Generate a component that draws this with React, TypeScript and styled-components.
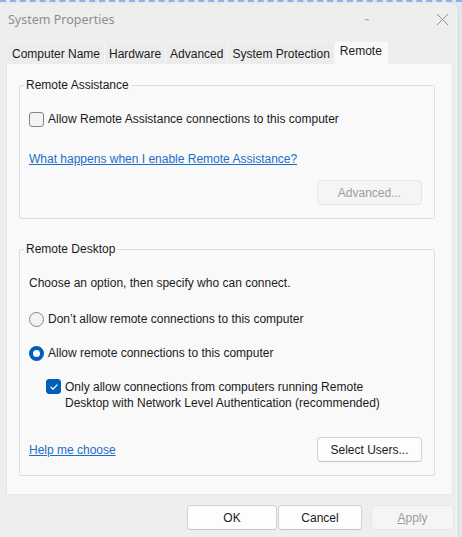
import React from 'react';
import styled, { createGlobalStyle } from 'styled-components';

const GlobalStyle = createGlobalStyle`
  html, body {
    margin: 0;
    padding: 0;
    background: #eeeeee;
  }
  body {
    font-family: "Liberation Sans", Arial, sans-serif;
    font-size: 12px;
    color: #1b1b1b;
  }
`;

const Desktop = styled.div`
  width: 462px;
  height: 537px;
  overflow: hidden;
  background: #dfe8f2;
  border-top: 2px dashed #8fb3dc;
  box-sizing: border-box;
  padding-top: 1px;
`;

const Window = styled.div`
  width: 459px;
  height: 534px;
  background: #eeeeee;
  border-top-right-radius: 8px;
  border-right: 1px solid #d6dbe2;
  box-sizing: border-box;
  display: flex;
  flex-direction: column;
`;

const TitleBar = styled.div`
  height: 39px;
  display: flex;
  align-items: center;
  padding: 0 0 6px 8px;
  box-sizing: border-box;
`;

const Title = styled.div`
  flex: 1;
  font-family: "Noto Sans", "Open Sans", sans-serif;
  font-size: 12.5px;
  color: #8d8d8d;
`;

const CaptionButton = styled.div<{ $w: number }>`
  width: ${p => p.$w}px;
  height: 32px;
  display: flex;
  align-items: center;
  justify-content: center;
  color: #9a9a9a;
`;

const TabStrip = styled.div`
  display: flex;
  align-items: flex-end;
  padding-left: 8px;
  height: 22px;
`;

const Tab = styled.div<{ $active?: boolean }>`
  height: ${p => (p.$active ? 22 : 19)}px;
  line-height: 19px;
  padding: 0 ${p => (p.$active ? 5 : 4)}px;
  background: ${p => (p.$active ? '#f9f9f9' : '#ececec')};
  border-right: 1px solid ${p => (p.$active ? 'transparent' : '#f7f7f7')};
  color: #1b1b1b;
  white-space: nowrap;
  box-sizing: border-box;
`;

const Panel = styled.div`
  margin: 0 5px 0 6px;
  height: 431px;
  background: #f9f9f9;
  border: 1px solid #e6e6e6;
  border-top: none;
  box-sizing: border-box;
  padding: 14px 17px 0 12px;
  display: flex;
  flex-direction: column;
  gap: 23px;
`;

const Group = styled.fieldset`
  margin: 0;
  border: 1px solid #dedede;
  border-radius: 2px;
  padding: 0 12px 13px 9px;
  min-width: 0;
`;

const Legend = styled.legend`
  padding: 0 2px;
  margin-left: -5px;
  line-height: 14px;
  color: #1b1b1b;
`;

const Row = styled.label<{ $top: number; $indent?: number; $align?: string }>`
  display: flex;
  align-items: ${p => p.$align ?? 'center'};
  gap: 4px;
  margin-top: ${p => p.$top}px;
  margin-left: ${p => p.$indent ?? 0}px;
  line-height: 16px;
`;

const Box = styled.span<{ $checked?: boolean }>`
  width: 15px;
  height: 15px;
  flex: none;
  box-sizing: border-box;
  border-radius: 3px;
  border: 1px solid ${p => (p.$checked ? '#005fb8' : '#858585')};
  background: ${p => (p.$checked ? '#005fb8' : '#f3f3f3')};
  display: flex;
  align-items: center;
  justify-content: center;
`;

const Radio = styled.span<{ $checked?: boolean }>`
  width: 15px;
  height: 15px;
  flex: none;
  box-sizing: border-box;
  border-radius: 50%;
  border: ${p => (p.$checked ? '4px solid #005fb8' : '1px solid #858585')};
  background: ${p => (p.$checked ? '#ffffff' : '#f3f3f3')};
`;

const Text = styled.div<{ $top: number }>`
  margin-top: ${p => p.$top}px;
  line-height: 14px;
`;

const Link = styled.a`
  color: #1a6fc8;
  text-decoration: underline;
  line-height: 14px;
  cursor: pointer;
`;

const LinkLine = styled.div<{ $top: number }>`
  margin-top: ${p => p.$top}px;
  line-height: 14px;
`;

const ActionRow = styled.div<{ $top: number }>`
  display: flex;
  align-items: center;
  justify-content: space-between;
  margin-top: ${p => p.$top}px;
`;

const Button = styled.button<{ $w: number; $disabled?: boolean; $gap?: number }>`
  width: ${p => p.$w}px;
  height: 25px;
  font-family: inherit;
  font-size: 12px;
  color: ${p => (p.$disabled ? '#9d9d9d' : '#1b1b1b')};
  background: ${p => (p.$disabled ? '#f5f5f5' : '#fdfdfd')};
  border: 1px solid ${p => (p.$disabled ? '#e6e6e6' : '#d3d3d3')};
  border-bottom-color: ${p => (p.$disabled ? '#e6e6e6' : '#c4c4c4')};
  border-radius: 4px;
  padding: 0;
  margin-right: ${p => p.$gap ?? 0}px;
`;

const Footer = styled.div`
  display: flex;
  justify-content: flex-end;
  padding: 10px 4px 0 0;
  gap: 1px;
`;

const Underline = styled.span`
  text-decoration: underline;
`;

const Check = () => (
  <svg width="10" height="10" viewBox="0 0 10 10">
    <path d="M2 5.2 L4.1 7.2 L8 3" fill="none" stroke="#fff" strokeWidth="1.2" strokeLinecap="round" strokeLinejoin="round" />
  </svg>
);

const tabs = ['Computer Name', 'Hardware', 'Advanced', 'System Protection', 'Remote'];

export default function App() {
  return (
    <>
      <GlobalStyle />
      <Desktop>
        <Window>
          <TitleBar>
            <Title>System Properties</Title>
            <CaptionButton $w={118}>
              <svg width="4" height="2"><rect width="4" height="1.2" fill="#a8a8a8" /></svg>
            </CaptionButton>
            <CaptionButton $w={32}>
              <svg width="13" height="13" viewBox="0 0 13 13">
                <path d="M1 1 L12 12 M12 1 L1 12" stroke="#8e8e8e" strokeWidth="1" />
              </svg>
            </CaptionButton>
          </TitleBar>

          <TabStrip>
            {tabs.map(t => (
              <Tab key={t} $active={t === 'Remote'}>{t}</Tab>
            ))}
          </TabStrip>

          <Panel>
            <Group>
              <Legend>Remote Assistance</Legend>
              <Row $top={19}>
                <Box />
                <span>Allow Remote Assistance connections to this computer</span>
              </Row>
              <LinkLine $top={25}>
                <Link>What happens when I enable Remote Assistance?</Link>
              </LinkLine>
              <ActionRow $top={14}>
                <span />
                <Button $w={105} $disabled>Advanced...</Button>
              </ActionRow>
            </Group>

            <Group>
              <Legend>Remote Desktop</Legend>
              <Text $top={20}>Choose an option, then specify who can connect.</Text>
              <Row $top={21}>
                <Radio />
                <span>Don’t allow remote connections to this computer</span>
              </Row>
              <Row $top={18}>
                <Radio $checked />
                <span>Allow remote connections to this computer</span>
              </Row>
              <Row $top={18} $indent={17} $align="flex-start">
                <Box $checked>
                  <Check />
                </Box>
                <span>
                  Only allow connections from computers running Remote
                  <br />
                  Desktop with Network Level Authentication (recommended)
                </span>
              </Row>
              <ActionRow $top={26}>
                <Link>Help me choose</Link>
                <Button $w={105}>Select Users...</Button>
              </ActionRow>
            </Group>
          </Panel>

          <Footer>
            <Button $w={90}>OK</Button>
            <Button $w={84} $gap={8}>Cancel</Button>
            <Button $w={83} $disabled>
              <Underline>A</Underline>pply
            </Button>
          </Footer>
        </Window>
      </Desktop>
    </>
  );
}
